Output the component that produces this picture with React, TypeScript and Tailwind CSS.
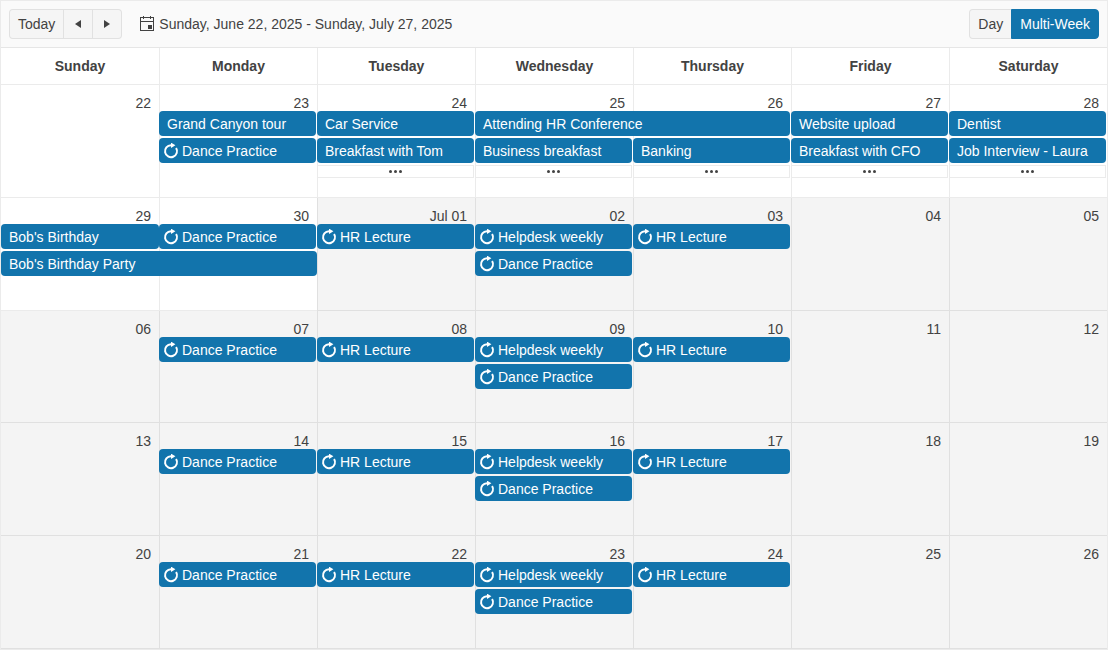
import { cx } from "class-variance-authority";

type CalendarEvent = { title: string; recurring?: boolean; span?: number };

type Day = {
  label: string;
  muted?: boolean;
  // null keeps a slot free for an event that runs over from the day before
  events?: (CalendarEvent | null)[];
  more?: boolean;
};

const WEEKDAYS = ["Sunday", "Monday", "Tuesday", "Wednesday", "Thursday", "Friday", "Saturday"];

const dance: CalendarEvent = { title: "Dance Practice", recurring: true };
const lecture: CalendarEvent = { title: "HR Lecture", recurring: true };
const helpdesk: CalendarEvent = { title: "Helpdesk weekly", recurring: true };

function regularWeek(labels: string[]): Day[] {
  const events = [[], [dance], [lecture], [helpdesk, dance], [lecture], [], []];
  return labels.map((label, i) => ({ label, muted: true, events: events[i] }));
}

const WEEKS: Day[][] = [
  [
    { label: "22" },
    { label: "23", events: [{ title: "Grand Canyon tour" }, dance] },
    { label: "24", events: [{ title: "Car Service" }, { title: "Breakfast with Tom" }], more: true },
    {
      label: "25",
      events: [{ title: "Attending HR Conference", span: 2 }, { title: "Business breakfast" }],
      more: true,
    },
    { label: "26", events: [null, { title: "Banking" }], more: true },
    { label: "27", events: [{ title: "Website upload" }, { title: "Breakfast with CFO" }], more: true },
    { label: "28", events: [{ title: "Dentist" }, { title: "Job Interview - Laura" }], more: true },
  ],
  [
    { label: "29", events: [{ title: "Bob's Birthday" }, { title: "Bob's Birthday Party", span: 2 }] },
    { label: "30", events: [dance] },
    { label: "Jul 01", muted: true, events: [lecture] },
    { label: "02", muted: true, events: [helpdesk, dance] },
    { label: "03", muted: true, events: [lecture] },
    { label: "04", muted: true },
    { label: "05", muted: true },
  ],
  regularWeek(["06", "07", "08", "09", "10", "11", "12"]),
  regularWeek(["13", "14", "15", "16", "17", "18", "19"]),
  regularWeek(["20", "21", "22", "23", "24", "25", "26"]),
];

function RecurIcon() {
  return (
    <svg viewBox="0 0 16 16" className="size-4 shrink-0" aria-hidden="true">
      <path d="M13.1 5A6 6 0 1 1 8 2.2h1" fill="none" stroke="currentColor" strokeWidth="2" />
      <path d="M8-.4v5.4l4.4-2.7z" fill="currentColor" />
    </svg>
  );
}

function CalendarIcon() {
  return (
    <svg viewBox="0 0 14 16" className="h-4 w-3.5" aria-hidden="true" shapeRendering="crispEdges">
      <path d="M.5 1.5h13v13H.5zM0 5.5h14" fill="none" stroke="currentColor" />
      <path d="M3 0h1v3H3zM10 0h1v3h-1zM8 9h4v4H8z" fill="currentColor" />
    </svg>
  );
}

function Toolbar() {
  return (
    <header className="flex items-center border-b border-black/8 bg-[#fafafa] p-2">
      <div className="flex h-[30px] divide-x divide-black/8 overflow-hidden rounded border border-black/8 bg-[#f5f5f5]">
        <button type="button" className="px-2">Today</button>
        <button type="button" aria-label="Previous" className="flex w-[29px] items-center justify-center">
          <svg viewBox="0 0 6 8" className="h-2 w-1.5" aria-hidden="true"><path d="M6 0v8L0 4z" fill="currentColor" /></svg>
        </button>
        <button type="button" aria-label="Next" className="flex w-7 items-center justify-center">
          <svg viewBox="0 0 6 8" className="h-2 w-1.5" aria-hidden="true"><path d="M0 0v8l6-4z" fill="currentColor" /></svg>
        </button>
      </div>
      <button type="button" className="ml-[18px] flex items-center gap-[5px]">
        <CalendarIcon />
        Sunday, June 22, 2025 - Sunday, July 27, 2025
      </button>
      <div className="ml-auto flex h-[30px]">
        <button type="button" className="rounded-l border border-r-0 border-black/8 bg-[#f5f5f5] px-2">Day</button>
        <button type="button" aria-pressed="true" className="rounded-r border border-[#1274ac] bg-[#1274ac] px-2 text-white">
          Multi-Week
        </button>
      </div>
    </header>
  );
}

function EventBar({ event, first }: { event: CalendarEvent; first: boolean }) {
  const wide = event.span === 2;
  return (
    <div
      className={cx(
        "relative z-10 flex h-[25px] items-center gap-[3px] rounded bg-[#1274ac] pt-px whitespace-nowrap text-white",
        event.recurring ? "pl-1" : "pl-2",
        !wide && "w-full",
        wide && (first ? "w-[200%]" : "w-[calc(200%+1px)]"),
      )}
    >
      {event.recurring && <RecurIcon />}
      {event.title}
    </div>
  );
}

function DayCell({ day, first }: { day: Day; first: boolean }) {
  return (
    <td
      className={cx(
        "border-b border-black/8 p-0 pt-2 align-top",
        !first && "border-l",
        day.muted && "bg-[#f4f4f4]",
      )}
    >
      <div className="h-[18px] pr-2 text-right leading-5">{day.label}</div>
      <div className={cx("flex flex-col gap-0.5", !first && "-ml-px mr-px")}>
        {day.events?.map((event, i) =>
          event ? <EventBar key={i} event={event} first={first} /> : <div key={i} className="h-[25px]" />,
        )}
        {day.more && (
          <button
            type="button"
            aria-label="More events"
            className="flex h-[13px] items-center justify-center border border-[#ebebeb] bg-white"
          >
            <svg viewBox="0 0 13 3" className="h-[3px] w-[13px]" aria-hidden="true">
              <circle cx="1.5" cy="1.5" r="1.5" fill="currentColor" />
              <circle cx="6.5" cy="1.5" r="1.5" fill="currentColor" />
              <circle cx="11.5" cy="1.5" r="1.5" fill="currentColor" />
            </svg>
          </button>
        )}
      </div>
    </td>
  );
}

export default function App() {
  return (
    <div className="flex min-h-screen flex-col border border-[#ebebeb] bg-white font-['Liberation_Sans',Arial,sans-serif] text-sm text-[#424242]">
      <Toolbar />
      <div className="grid flex-1">
        <table className="w-full table-fixed border-separate border-spacing-0">
          <thead>
            <tr className="h-[37px]">
              {WEEKDAYS.map((name, i) => (
                <th key={name} scope="col" className={cx("border-b border-black/8 p-0 font-bold", i > 0 && "border-l")}>
                  {name}
                </th>
              ))}
            </tr>
          </thead>
          <tbody>
            {WEEKS.map((week, w) => (
              <tr key={w} className="h-28">
                {week.map((day, d) => (
                  <DayCell key={day.label} day={day} first={d === 0} />
                ))}
              </tr>
            ))}
          </tbody>
        </table>
      </div>
    </div>
  );
}
